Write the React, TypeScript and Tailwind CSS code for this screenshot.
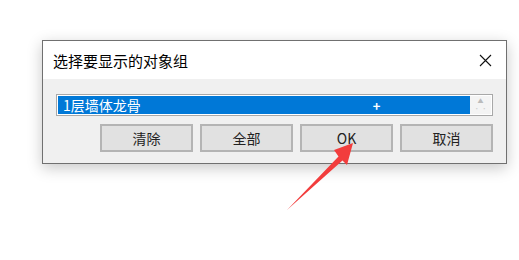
import React from "react";

const font = { fontFamily: '"Noto Sans CJK SC", "Noto Sans", sans-serif' };

const buttons = ["清除", "全部", "OK", "取消"];

const Arrow = () => (
  <svg
    className="absolute left-[280px] top-[135px]"
    width="80"
    height="80"
    viewBox="0 0 80 80"
  >
    <polygon
      points="73,8 67,30 62.5,25.5 7,75 58.5,21.5 54,15"
      fill="#f23d3d"
    />
  </svg>
);

export default function App() {
  return (
    <div className="relative w-[519px] h-[260px] bg-white overflow-hidden" style={font}>
      <div className="ml-[42px] mt-[40px] w-[465px] border border-[#707070] bg-[#f0f0f0] shadow-[0_4px_14px_rgba(0,0,0,0.22)]">
        {/* title bar */}
        <div className="flex items-center justify-between h-[38px] bg-white pl-[10px] pr-[14px]">
          <span className="text-[15px] text-black leading-none">选择要显示的对象组</span>
          <svg width="13" height="13" viewBox="0 0 13 13">
            <path d="M1 1 L12 12 M12 1 L1 12" stroke="#111" strokeWidth="1.1" />
          </svg>
        </div>

        {/* body */}
        <div className="px-[13px] pt-[15px] pb-[11px]">
          <div className="flex h-[22px] border border-[#a8a8a8] bg-white p-px">
            <div className="flex-1 flex items-center bg-[#0078d7] pl-[5px] text-white text-[14px] leading-none">
              <span>1层墙体龙骨</span>
              <span className="ml-[232px] text-[13px] font-bold">+</span>
            </div>
            <div className="w-[21px] flex flex-col items-center justify-between bg-[#f4f4f4] py-[2px]">
              <span className="text-[6px] leading-none text-[#bbb]">▲</span>
              <span className="text-[6px] leading-none text-[#ccc]">· ·</span>
            </div>
          </div>

          <div className="flex justify-end gap-[7px] mt-[8px]">
            {buttons.map((b) => (
              <button
                key={b}
                className="w-[93px] h-[28px] border-2 border-[#b4b4b4] bg-[#e1e1e1] text-[14px] text-[#222] leading-none"
                style={font}
              >
                {b}
              </button>
            ))}
          </div>
        </div>
      </div>
      <Arrow />
    </div>
  );
}
